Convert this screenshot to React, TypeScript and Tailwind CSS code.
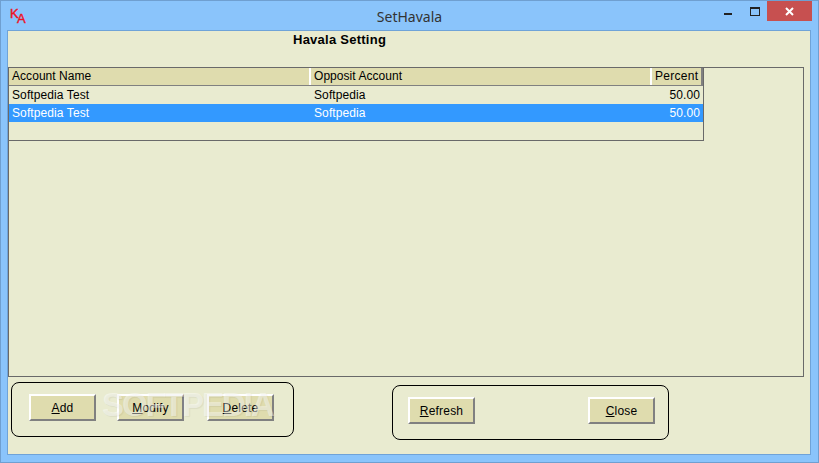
const rows = [
  { name: "Softpedia Test", opposite: "Softpedia", percent: "50.00", selected: false },
  { name: "Softpedia Test", opposite: "Softpedia", percent: "50.00", selected: true },
];

function WinButton({ hotkey, rest, className }: { hotkey: string; rest: string; className: string }) {
  return (
    <button
      className={`w-[67px] h-[27px] bg-[#dfdcae] border-2 border-t-white border-l-white border-r-[#808080] border-b-[#808080] text-[12px] tracking-[0.2px] text-black text-center ${className}`}
    >
      <u>{hotkey}</u>
      {rest}
    </button>
  );
}

export default function App() {
  return (
    <div className="relative w-[819px] h-[463px] flex flex-col overflow-hidden bg-[#8ac4fb] border border-[#6f9fd0] font-['Liberation_Sans',sans-serif]">
      {/* Title bar */}
      <div className="relative h-[29px] shrink-0 flex items-center justify-center">
        <svg className="absolute left-[8px] top-[6px]" width="20" height="18" viewBox="0 0 20 18">
          <text x="1" y="11" fontSize="13" fill="#ee1122" stroke="#ee1122" strokeWidth="0.4" fontFamily="Liberation Sans">K</text>
          <text x="8" y="16" fontSize="13" fill="#ee1122" stroke="#ee1122" strokeWidth="0.4" fontFamily="Liberation Sans">A</text>
        </svg>
        <span className="text-[14px] leading-none text-[#333] font-['Noto_Sans',sans-serif] mt-[2px]">SetHavala</span>
        <div className="absolute right-[6px] top-0 flex items-start">
          <div className="w-[8px] h-[2px] bg-[#222] mt-[12px] mr-[18px]" />
          <div className="w-[10px] h-[9px] border border-t-2 border-[#222] mt-[6px] mr-[7px]" />
          <div className="w-[45px] h-[20px] bg-[#c75050] flex items-center justify-center">
            <svg width="9" height="9" viewBox="0 0 9 9">
              <path d="M1 1 L8 8 M8 1 L1 8" stroke="#fff" strokeWidth="2" />
            </svg>
          </div>
        </div>
      </div>

      {/* Client area */}
      <div className="relative flex-1 ml-[6px] mr-[7px] mb-[7px] flex flex-col bg-[#e9ebd0] border border-[#6fa3d8]">
        <div className="h-[36px] shrink-0 pl-[285px] pt-[1px] text-[13px] leading-[16px] tracking-[0.25px] font-bold text-black">
          Havala Setting
        </div>

        {/* Grid frame */}
        <div className="h-[310px] w-[796px] shrink-0 border border-[#696969]">
          <div className="w-[695px] h-[73px] border-r border-b border-[#696969] flex flex-col text-[12px] text-black">
            <div className="h-[18px] shrink-0 flex bg-[#dfdcae] border-b border-[#808080] leading-[17px] tracking-[0.05px]">
              <div className="w-[302px] pl-[3px] border-r-2 border-white">Account Name</div>
              <div className="w-[341px] pl-[3px] border-r-2 border-white">Opposit Account</div>
              <div className="flex-1 pl-[3px] tracking-[0.3px] border-r-2 border-[#808080]">Percent</div>
            </div>
            {rows.map((row, i) => (
              <div
                key={i}
                className={`h-[18px] shrink-0 flex leading-[18px] tracking-[0.1px] ${row.selected ? "bg-[#3399ff] text-white" : ""}`}
              >
                <div className="w-[302px] pl-[3px]">{row.name}</div>
                <div className="w-[341px] pl-[3px]">{row.opposite}</div>
                <div className="flex-1 pr-[3px] text-right">{row.percent}</div>
              </div>
            ))}
          </div>
        </div>

        {/* Button groups */}
        <div className="flex items-start">
          <div className="w-[283px] h-[55px] ml-[3px] mt-[5px] flex items-start rounded-[8px] border border-black pl-[17px] pt-[11px]">
            <WinButton hotkey="A" rest="dd" className="mr-[21px]" />
            <WinButton hotkey="M" rest="odify" className="mr-[23px]" />
            <WinButton hotkey="D" rest="elete" className="" />
          </div>
          <div className="w-[277px] h-[55px] ml-[98px] mt-[8px] flex items-start justify-between rounded-[8px] border border-black pl-[15px] pr-[13px] pt-[11px]">
            <WinButton hotkey="R" rest="efresh" className="" />
            <WinButton hotkey="C" rest="lose" className="" />
          </div>
        </div>

        {/* Watermark */}
        <span className="absolute left-[94px] top-[354px] text-[33px] leading-[40px] font-bold tracking-[-2px] text-white/45 [text-shadow:1px_1px_1px_rgba(0,0,0,0.06)] pointer-events-none">
          SOFTPEDIA
        </span>
      </div>
    </div>
  );
}
